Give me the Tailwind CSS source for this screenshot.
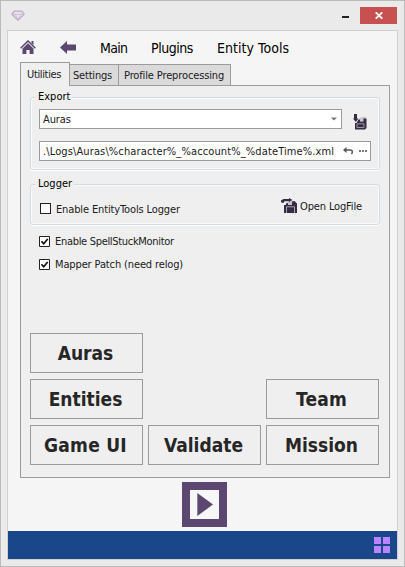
<!DOCTYPE html>
<html lang="en">
<head>
<meta charset="utf-8">
<title>Entity Tools</title>
<script src="https://cdn.jsdelivr.net/npm/@tailwindcss/browser@4"></script>
</head>
<body>
<div class="w-[405px] h-[567px] flex flex-col overflow-hidden whitespace-nowrap border border-[#bbbbbb] bg-[#eaeaea] px-[6px] pb-[6px] text-[11px] leading-[14px] text-[#202020] font-['Tahoma','DejaVu_Sans_Condensed','DejaVu_Sans',sans-serif]">
  <!-- title bar -->
  <header class="h-[29px] shrink-0 flex items-start pl-[4px] pr-[1px] pt-[6px]">
    <svg class="mt-[3px]" width="14" height="12" viewBox="0 0 14 12" fill="none" stroke="#c5b0d2" stroke-width="1.5" stroke-linejoin="round"><path d="M3.2 1.2h7.6l2.3 3L7 10.3.9 4.2z"/><path d="M1.2 4.3h11.6M4.3 4.3L7 9.5l2.7-5.2" stroke-width=".8"/></svg>
    <span class="ml-auto mt-[9px] w-[7px] h-[2px] bg-[#222]"></span>
    <button class="ml-[11px] w-[37px] h-[17px] bg-[#c75050] flex items-center justify-center"><svg width="8" height="7" viewBox="0 0 8 7" stroke="#fff" stroke-width="1.8"><path d="M.7.3l6.600 6.400M7.300.3L.7 6.700"/></svg></button>
  </header>

  <main class="flex-1 min-h-0 border border-[#d0d0d0] bg-[#f5f5f5] flex flex-col">
    <nav class="h-[31px] shrink-0 flex items-center pl-[12px] pt-[2px] text-[14px] leading-[18px] text-black">
      <svg width="16" height="15" viewBox="0 0 16 15"><path fill="#5b4770" d="M8 3.200l5.500 5.300V14H9.600v-4H6.400v4H2.500V8.500z"/><path fill="none" stroke="#5b4770" stroke-width="1.500" d="M.6 8.300L8 1l7.400 7.300"/><path fill="#5b4770" d="M11.500 1h2v4l-2-2z"/></svg>
      <svg class="ml-[24px] -mt-[1px]" width="16" height="13" viewBox="0 0 16 13" fill="#5b4770"><path d="M0 6.500L7 0v3.600h9v5.800H7V13z"/></svg>
      <span class="ml-[24px] w-[51px] tracking-[-0.7px]">Main</span>
      <span class="w-[66px] tracking-[-0.45px]">Plugins</span>
      <span class="tracking-[0.05px]">Entity Tools</span>
    </nav>

    <!-- tabs -->
    <div class="h-[24px] shrink-0 pl-[12px] flex items-end relative z-10 -mb-[1px]">
      <div class="w-[50px] h-[24px] border border-b-0 border-[#9b9b9b] bg-[#efefef] pt-[5px] pl-[6px] tracking-[-0.35px]">Utilities</div>
      <div class="w-[50px] h-[22px] -ml-[1px] border border-[#9b9b9b] bg-[#dadada] pt-[4px] pl-[3px] tracking-[-0.2px]">Settings</div>
      <div class="w-[113px] h-[22px] -ml-[1px] border border-[#9b9b9b] bg-[#dadada] pt-[4px] pl-[5px] tracking-[-0.13px]">Profile Preprocessing</div>
    </div>

    <section class="mx-[12px] w-[370px] h-[393px] shrink-0 border border-[#9b9b9b] bg-[#efefef] pl-[9px] pt-[11px] flex flex-col">
      <div class="w-[350px] h-[73px] shrink-0 rounded-[3px] border border-[#d2dce6] shadow-[inset_0_0_0_1px_#fafafa,0_1px_0_#fff] px-[8px] flex flex-col">
        <div class="-mt-[8px] ml-[-3px] self-start bg-[#efefef] px-[2px] h-[15px] text-black">Export</div>
        <div class="mt-[4px] h-[20px] flex items-center">
          <div class="w-[303px] h-[20px] border border-[#9b9b9b] bg-white flex items-center pl-[3px] pr-[4px]"><span class="mt-[1px] tracking-[-0.1px]">Auras</span>
            <svg class="ml-auto" width="6" height="4" viewBox="0 0 6 4" fill="#777"><path d="M0 .5h6L3 3.500z"/></svg></div>
          <svg class="ml-[11px] mt-[5px]" width="14" height="16" viewBox="0 0 14 16"><path fill="#352b42" d="M1 0h3v4.500h1.500L2.800 8 0 4.500h1z"/><path fill="#c9c5cd" d="M6.500 4L11 2.500l2 1V7H6.500z"/><path fill="#352b42" d="M5.500 5.500H7v2h3.500v-3h3V14L12 15.500H2V9h1.500z"/><path d="M4 9.800h7v3.700H4z" fill="none" stroke="#a7a0ae" stroke-width=".9"/></svg>
        </div>
        <div class="mt-[12px] w-[332px] h-[20px] shrink-0 border border-[#9b9b9b] bg-white flex items-center pl-[3px] pr-[3px]"><span class="mt-[1px] tracking-[0.12px]">.\Logs\Auras\%character%_%account%_%dateTime%.xml</span>
          <svg class="ml-auto mr-[5px]" width="11" height="8" viewBox="0 0 11 8"><path d="M0 3l3.500-3v6z" fill="#555"/><path d="M3 3h4.500c2 0 2.500 2 1 4" fill="none" stroke="#555" stroke-width="1.500"/></svg>
          <svg width="8" height="2" viewBox="0 0 8 2" fill="#777"><path d="M0 0h2v2H0zM3 0h2v2h-2zM6 0h2v2H6z"/></svg></div>
      </div>

      <div class="mt-[14px] w-[350px] h-[41px] shrink-0 rounded-[3px] border border-[#d2dce6] shadow-[inset_0_0_0_1px_#fafafa,0_1px_0_#fff] px-[9px] flex flex-col">
        <div class="-mt-[8px] ml-[-4px] self-start bg-[#efefef] px-[2px] h-[15px] text-black">Logger</div>
        <div class="mt-[4px] h-[20px] flex items-center">
          <span class="mt-[5px] w-[11px] h-[11px] border border-[#222] bg-white"></span><span class="ml-[5px] mt-[7px] tracking-[-0.13px]">Enable EntityTools Logger</span>
          <svg class="ml-auto mt-[-1px]" width="16" height="16" viewBox="0 0 16 16"><path fill="#c9c5cd" d="M5 5l4-2 4 .5V7H5z"/><path fill="#352b42" d="M0 2.500L2.500 1H8V0l3.500 2L8 4V3.200H3.500L2.500 5 0 4.200zM3 7h2V5.500l2-.5v2h4V3.500L13.500 3 16 5.500V15H3z"/><path d="M5.500 8.800h8V15M5.500 8.800V15" fill="none" stroke="#b5aebb" stroke-width=".9"/></svg>
          <span class="ml-[3px] mr-[8px] mt-[1px] tracking-[-0.15px]">Open LogFile</span>
        </div>
      </div>

      <label class="mt-[9px] ml-[9px] h-[14px] flex items-center"><svg width="11" height="11" viewBox="0 0 11 11"><path fill="#fff" stroke="#222" d="M.5.5h10v10H.5z"/><path d="M2.500 5.200l2.200 2.500L8.700 3" fill="none" stroke="#111" stroke-width="1.700"/></svg><span class="ml-[5px] mt-[1px] tracking-[-0.31px]">Enable SpellStuckMonitor</span></label>
      <label class="mt-[9px] ml-[9px] h-[14px] flex items-center"><svg width="11" height="11" viewBox="0 0 11 11"><path fill="#fff" stroke="#222" d="M.5.5h10v10H.5z"/><path d="M2.500 5.200l2.200 2.500L8.700 3" fill="none" stroke="#111" stroke-width="1.700"/></svg><span class="ml-[5px] mt-[1px] tracking-[-0.13px]">Mapper Patch (need relog)</span></label>

      <div class="mt-auto mb-[12px] grid grid-cols-[repeat(3,113px)] auto-rows-[40px] gap-x-[5px] gap-y-[6px] text-[19px] font-bold leading-[24px] text-[#262626]">
        <button class="border border-[#9b9b9b] col-start-1 pr-[2px]">Auras</button>
        <button class="border border-[#9b9b9b] col-start-1 pr-[2px]">Entities</button>
        <button class="border border-[#9b9b9b] col-start-3 pr-[2px] tracking-[0.2px]">Team</button>
        <button class="border border-[#9b9b9b] col-start-1 pr-[2px] tracking-[0.25px]">Game UI</button>
        <button class="border border-[#9b9b9b] pr-[2px]">Validate</button>
        <button class="border border-[#9b9b9b] pr-[2px]">Mission</button>
      </div>
    </section>

    <div class="mt-[4px] ml-[174px] w-[45px] h-[45px] shrink-0"><svg width="45" height="45" viewBox="0 0 45 45"><path fill="#5b4770" d="M0 0h45v45H0z"/><path fill="#f7f7f7" d="M8 8h29v29H8z"/><path fill="#5b4770" d="M15.300 11v23L31 22.500z"/></svg></div>

    <footer class="mt-auto h-[28px] shrink-0 bg-[#1a4789] flex items-center justify-end pr-[7px]">
      <svg width="16" height="16" viewBox="0 0 16 16" fill="#b884ff"><path d="M0 0h7v7H0zM9 0h7v7H9zM0 9h7v7H0zM9 9h7v7H9z"/></svg>
    </footer>
  </main>
</div>
</body>
</html>
